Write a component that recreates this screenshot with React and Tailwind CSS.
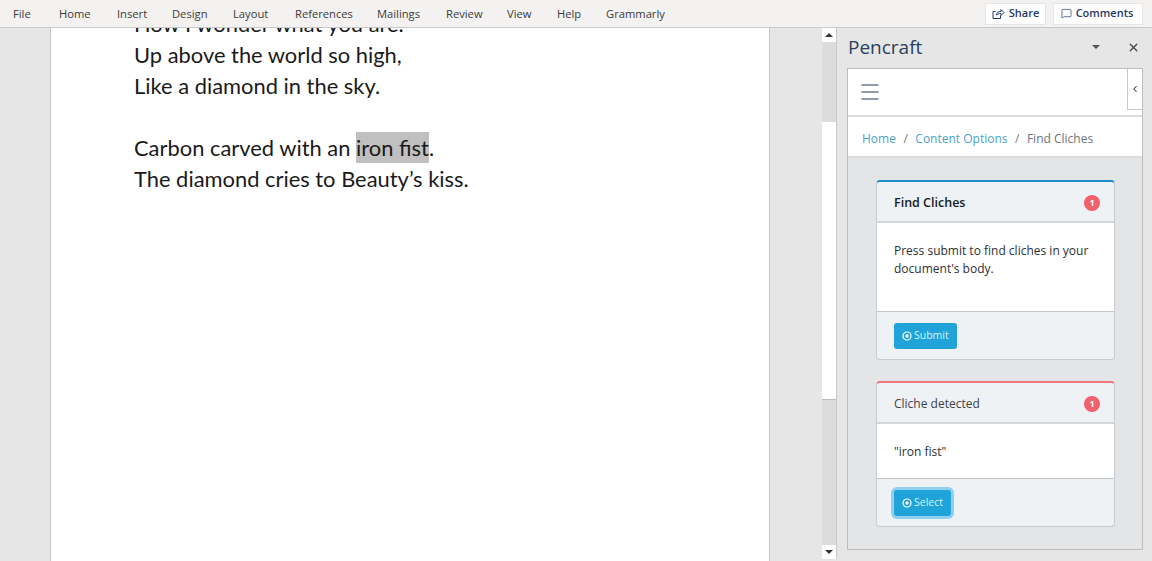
import React from "react";
import { MessageSquare, X, ChevronLeft, Menu } from "lucide-react";

const menuItems = [
  ["File", "w-[46px]"],
  ["Home", "w-[58px]"],
  ["Insert", "w-[55px]"],
  ["Design", "w-[61px]"],
  ["Layout", "w-[62px]"],
  ["References", "w-[82px]"],
  ["Mailings", "w-[69px]"],
  ["Review", "w-[61px]"],
  ["View", "w-[50px]"],
  ["Help", "w-[49px]"],
  ["Grammarly", "w-[70px]"],
];

const ShareIcon = () => (
  <svg width="13" height="12" viewBox="0 0 13 12" fill="none" stroke="currentColor" strokeWidth="1">
    <path d="M8.5 7.5v3h-7.5v-7h2.5" />
    <path d="M4.5 7c0-2.5 2-3.5 4.5-3.5v-2l3 3-3 3v-2c-2 0-3.500 0.500-4.500 1.500z" />
  </svg>
);

const CircleDot = () => (
  <svg width="10" height="10" viewBox="0 0 10 10" className="shrink-0">
    <circle cx="5" cy="5" r="4" fill="none" stroke="white" strokeWidth="1.2" />
    <circle cx="5" cy="5" r="1.7" fill="white" />
  </svg>
);

const Badge = () => (
  <span className="w-4 h-4 rounded-full bg-[#f0616d] text-white text-[9px] font-bold flex items-center justify-center">
    1
  </span>
);

const Card = ({ accent, title, bold, body, bodyH, button, focused }) => (
  <div className={`rounded-[4px] border border-[#c8ccd0] border-t-2 ${accent} bg-[#eff2f5] overflow-hidden`}>
    <div className="h-[41px] pt-[3px] pl-[17px] pr-[14px] flex items-center justify-between border-b-2 border-[#d4d7da]">
      <span className={bold ? "text-[12.5px] font-semibold text-[#151b20]" : "text-[12px] text-[#3c4248]"}>{title}</span>
      <Badge />
    </div>
    <div className={`${bodyH} pt-[19px] bg-white pl-[17px] pr-4 border-b border-[#c3c7cb] text-[12px] leading-[18px] text-[#2b3035]`}>
      {body}
    </div>
    <div className="h-[47px] pl-[17px] flex items-center">
      <button
        className={`h-[26px] px-2 rounded-[3px] bg-[#1fa3d8] text-[#d9f0fa] text-[10.5px] flex items-center gap-[2px] ${
          focused ? "ring-[3px] ring-[#8fd0ee]" : ""
        }`}
      >
        <CircleDot />
        {button}
      </button>
    </div>
  </div>
);

const ScrollButton = ({ up }) => (
  <div className="h-[14px] bg-white flex items-center justify-center">
    <div
      className={`w-0 h-0 border-l-[4px] border-r-[4px] border-l-transparent border-r-transparent ${
        up ? "border-b-[4px] border-b-[#333]" : "border-t-[4px] border-t-[#333]"
      }`}
    />
  </div>
);

const App = () => {
  return (
    <div className="w-[1152px] h-[561px] flex flex-col overflow-hidden bg-[#e6e6e6] font-['Open_Sans',sans-serif]">
      {/* Ribbon */}
      <div className="relative z-10 h-[28px] shrink-0 bg-[#f3f2f1] border-b border-[#c9c9c9] flex items-center pl-[13px] pr-[9px] text-[11.2px] text-[#3b3a39]">
        {menuItems.map(([name, w]) => (
          <span key={name} className={`${w} pt-px`}>{name}</span>
        ))}
        <div className="ml-auto flex gap-[7px] text-[11px] text-[#1f3864] font-semibold">
          <div className="h-[22px] w-[61px] bg-white border border-[#e6e5e3] flex items-center justify-center gap-[4px]">
            <ShareIcon />
            Share
          </div>
          <div className="h-[22px] w-[90px] pr-[2px] bg-white border border-[#e6e5e3] flex items-center justify-center gap-[4px]">
            <MessageSquare size={11} strokeWidth={1.5} />
            Comments
          </div>
        </div>
      </div>

      <div className="flex-1 min-h-0 flex">
        {/* Document */}
        <div className="w-[822px] shrink-0 pl-[50px] pr-[52px] overflow-hidden">
          <div className="h-[calc(100%+20px)] bg-white border-x border-[#c6c6c6] pl-[83px] -mt-[20px] font-['Lato',sans-serif] text-[21.9px] leading-[31px] text-[#1a1a1a]">
            <p>How I wonder what you are.</p>
            <p>Up above the world so high,</p>
            <p>Like a diamond in the sky.</p>
            <p className="mt-[31px]">
              Carbon carved with an <span className="inline-block bg-[#c0c0c0]">iron fist</span>.
            </p>
            <p>The diamond cries to Beauty’s kiss.</p>
          </div>
        </div>

        {/* Scrollbar */}
        <div className="w-[15px] shrink-0 bg-[#dcdcdc] border-r border-[#c9c9c9] flex flex-col h-[531px]">
          <ScrollButton up />
          <div className="h-[80px]" />
          <div className="h-[278px] bg-white border-b border-[#bdbdbd]" />
          <div className="flex-1" />
          <ScrollButton />
        </div>

        {/* Task pane */}
        <div className="flex-1 min-w-0 pl-[11px] pr-[9px] flex flex-col">
          <div className="h-[40px] shrink-0 pb-[2px] flex items-center justify-between pr-[3px]">
            <span className="text-[19px] text-[#2b3f5c]">Pencraft</span>
            <div className="flex items-center gap-[27px]">
              <div className="w-0 h-0 border-l-[4px] border-r-[4px] border-t-[4px] border-l-transparent border-r-transparent border-t-[#555]" />
              <X size={13} strokeWidth={2.5} className="text-[#444]" />
            </div>
          </div>
          <div className="h-[482px] -ml-px border border-[#bdbdbd] flex flex-col">
            <div className="relative h-[48px] shrink-0 bg-white border-b-2 border-[#dcdcdc] pl-[10px] flex items-center">
              <Menu size={24} strokeWidth={1.5} className="text-[#6b7b8a]" />
              <div className="absolute right-0 top-0 w-[15px] h-[41px] bg-white border-l border-b border-[#c8c8c8] flex items-center justify-center">
                <ChevronLeft size={10} strokeWidth={2.5} className="text-[#333]" />
              </div>
            </div>
            <div className="h-[41px] shrink-0 pt-[4px] bg-white border-b-2 border-[#dcdcdc] pl-[14px] flex items-center gap-[7.5px] text-[12px]">
              <span className="text-[#4ba3c7]">Home</span>
              <span className="text-[#6c757d]">/</span>
              <span className="text-[#4ba3c7]">Content Options</span>
              <span className="text-[#6c757d]">/</span>
              <span className="text-[#6c757d]">Find Cliches</span>
            </div>
            <div className="flex-1 bg-[#e4e5e6] pt-[22px] pl-[28px] pr-[27px] flex flex-col gap-[21px]">
              <Card
                accent="border-t-[#1f8fc9]"
                title="Find Cliches"
                bold
                bodyH="h-[89px]"
                body="Press submit to find cliches in your document's body."
                button="Submit"
              />
              <Card
                accent="border-t-[#f0757d]"
                title="Cliche detected"
                bodyH="h-[55px]"
                body={'"iron fist"'}
                button="Select"
                focused
              />
            </div>
          </div>
        </div>
      </div>
    </div>
  );
};

export default App;
